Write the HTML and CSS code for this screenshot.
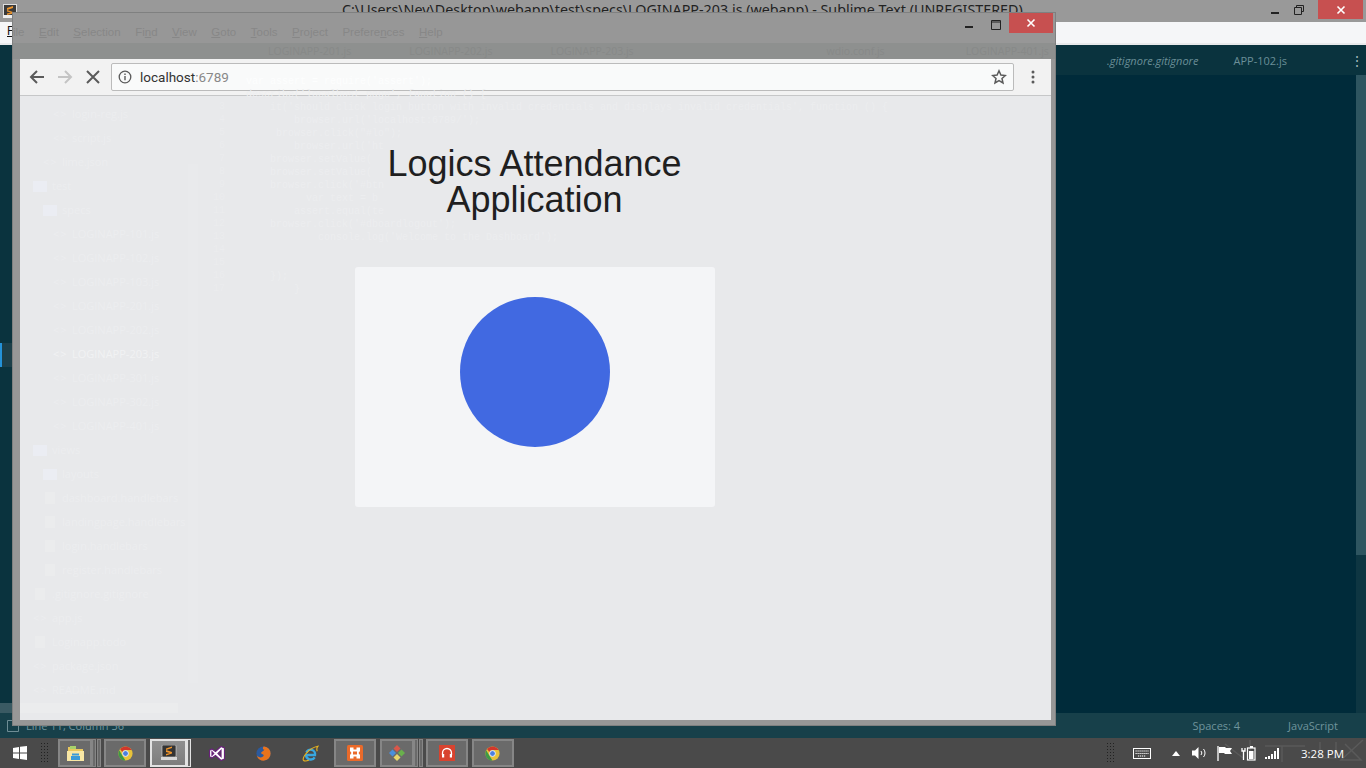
FILE: index.html
```html
<!DOCTYPE html>
<html lang="en">
<head>
  <meta charset="UTF-8" />
  <title>Logics Attendance Application</title>
  <link rel="stylesheet" href="styles.css">
</head>
<body>

  <!-- Sublime window behind -->
  <div class="sublime">
    <div class="sub-title">
      <svg class="sub-logo" width="14" height="14" viewBox="0 0 14 14"><rect x=".5" y=".5" width="13" height="11" fill="#3a3a3a" stroke="#ddd"/><path d="M4 4l6-2v2L4 6zM4 6l6 2v1.500l-6 1.500V9.500l4-1L4 7.500z" fill="#f0952b"/><rect y="11" width="14" height="3" fill="#eee"/></svg>
      <span class="sub-title-text">C:\Users\Nev\Desktop\webapp\test\specs\LOGINAPP-203.js (webapp) - Sublime Text (UNREGISTERED)</span>
      <div class="win-btns">
        <svg class="win-icon" width="10" height="10" viewBox="0 0 10 10"><rect x="1" y="7" width="8" height="2" fill="#222"/></svg>
        <svg class="win-icon" width="10" height="10" viewBox="0 0 10 10"><path d="M2.500 2.500V.5h7v6h-2M.5 2.500h7v7h-7z" fill="none" stroke="#222"/></svg>
        <div class="win-close">
          <svg width="10" height="10" viewBox="0 0 10 10"><path d="M1.500 1.500l7 7M8.500 1.500l-7 7" stroke="#fff" stroke-width="1.600"/></svg>
        </div>
      </div>
    </div>
    <div class="sub-menu"><span class="sub-menu-f">F</span></div>
    <div class="sub-tabs">
      <span class="sub-tab git">.gitignore.gitignore</span>
      <span class="sub-tab app">APP-102.js</span>
      <span class="sub-dots">⋮</span>
    </div>
    <div class="sub-main">
      <div class="sub-side">
        <div class="sub-side-active"></div>
        <div class="sub-side-scroll"></div>
      </div>
      <div class="sub-editor"></div>
      <div class="sub-scroll"><div class="sub-scroll-thumb"></div></div>
    </div>
    <div class="sub-status">
      <svg class="status-box" width="12" height="12" viewBox="0 0 12 12"><path d="M.5 .5h11v11H.5z" fill="none" stroke="#6f8d95"/></svg>
      <span class="status-line">Line 11, Column 36</span>
      <span class="status-spaces">Spaces: 4</span>
      <span class="status-lang">JavaScript</span>
    </div>
  </div>

  <!-- Chrome window on top -->
  <div class="chrome">
    <div class="chrome-title">
      <div class="ghost-menu">
        <span>ile</span><span><u>E</u>dit</span><span><u>S</u>election</span><span>Fi<u>n</u>d</span><span><u>V</u>iew</span><span><u>G</u>oto</span><span><u>T</u>ools</span><span><u>P</u>roject</span><span>Prefere<u>n</u>ces</span><span><u>H</u>elp</span>
      </div>
      <div class="win-btns chrome-btns">
        <svg class="win-icon min" width="10" height="10" viewBox="0 0 10 10"><rect x="1" y="7" width="8" height="2" fill="#222"/></svg>
        <svg class="win-icon max" width="10" height="10" viewBox="0 0 10 10"><path d="M.5 .5h9v9h-9zM.5 2h9" fill="none" stroke="#222"/></svg>
        <div class="win-close chrome-close">
          <svg width="10" height="10" viewBox="0 0 10 10"><path d="M1.500 1.500l7 7M8.500 1.500l-7 7" stroke="#fff" stroke-width="1.600"/></svg>
        </div>
      </div>
    </div>
    <div class="chrome-strip">
      <span>LOGINAPP-201.js</span><span>LOGINAPP-202.js</span><span>LOGINAPP-203.js</span><span class="far1">wdio.conf.js</span><span class="far2">LOGINAPP-401.js</span>
    </div>
    <div class="chrome-client">
      <div class="toolbar">
        <svg class="tool-icon" width="18" height="18" viewBox="0 0 18 18"><path d="M16 9H3M9 3L3 9l6 6" fill="none" stroke="#5a5a5a" stroke-width="2"/></svg>
        <svg class="tool-icon" width="18" height="18" viewBox="0 0 18 18"><path d="M2 9h13M9 3l6 6-6 6" fill="none" stroke="#c4c4c4" stroke-width="2"/></svg>
        <svg class="tool-icon" width="18" height="18" viewBox="0 0 18 18"><path d="M3 3l12 12M15 3L3 15" fill="none" stroke="#5a5a5a" stroke-width="2"/></svg>
        <div class="omnibox">
          <svg width="14" height="14" viewBox="0 0 14 14"><circle cx="7" cy="7" r="5.800" fill="none" stroke="#5a5a5a" stroke-width="1.300"/><path d="M7 6v4.200M7 3.600v1.400" stroke="#5a5a5a" stroke-width="1.400"/></svg>
          <span class="url">localhost<span class="url-port">:6789</span></span>
          <svg class="star" width="16" height="16" viewBox="0 0 16 16"><path d="M8 1.800l1.900 4.200 4.500.500-3.400 3 1 4.500L8 11.700 4 14l1-4.500-3.400-3 4.500-.500z" fill="none" stroke="#5a5a5a" stroke-width="1.500"/></svg>
        </div>
        <svg class="tool-menu" width="4" height="14" viewBox="0 0 4 14"><circle cx="2" cy="2" r="1.500" fill="#5a5a5a"/><circle cx="2" cy="7" r="1.500" fill="#5a5a5a"/><circle cx="2" cy="12" r="1.500" fill="#5a5a5a"/></svg>
      </div>

      <!-- faint reflection of the sublime sidebar and code -->
      <div class="ghost-bar"></div>
      <div class="ghost-hbar"></div>
      <div class="ghost-side">
        <div class="gr d3 code">login-reg.js</div>
        <div class="gr d3 code">script.js</div>
        <div class="gr d2 code">lime.json</div>
        <div class="gr d1 folder">test</div>
        <div class="gr d2 folder">specs</div>
        <div class="gr d3 code">LOGINAPP-101.js</div>
        <div class="gr d3 code">LOGINAPP-102.js</div>
        <div class="gr d3 code">LOGINAPP-103.js</div>
        <div class="gr d3 code">LOGINAPP-201.js</div>
        <div class="gr d3 code">LOGINAPP-202.js</div>
        <div class="gr d3 code on">LOGINAPP-203.js</div>
        <div class="gr d3 code">LOGINAPP-301.js</div>
        <div class="gr d3 code">LOGINAPP-302.js</div>
        <div class="gr d3 code">LOGINAPP-401.js</div>
        <div class="gr d1 folder">views</div>
        <div class="gr d2 folder">layouts</div>
        <div class="gr d2 doc">dashboard.handlebars</div>
        <div class="gr d2 doc">landingpage.handlebars</div>
        <div class="gr d2 doc">login.handlebars</div>
        <div class="gr d2 doc">register.handlebars</div>
        <div class="gr d1 doc">.gitignore.gitignore</div>
        <div class="gr d1 code">app.js</div>
        <div class="gr d1 doc">Loginapp.todo</div>
        <div class="gr d1 code">package.json</div>
        <div class="gr d1 code">README.md</div>
      </div>
      <div class="ghost-nums">
        <div>3</div><div>4</div><div>5</div><div>6</div><div>7</div><div>8</div><div>9</div><div>10</div><div>11</div><div>12</div><div>13</div><div>14</div><div>15</div><div>16</div><div>17</div>
      </div>
      <div class="ghost-code">
        <div class="top">var assert = require('assert');</div>
        <div class="edge">describe('localhost page', function () {</div>
        <div>    it('should click login button with invalid credentials and displays invalid credentials', function () {</div>
        <div>        browser.url('localhost:6789/');</div>
        <div>     browser.click("#lo");</div>
        <div>        browser.url('ht</div>
        <div>    browser.setValue(</div>
        <div>    browser.setValue(</div>
        <div>    browser.click('#btn</div>
        <div>          var text = b</div>
        <div>        assert.equal(te</div>
        <div>    browser.click('#dboardlogout');</div>
        <div>            console.log('Welcome to the Dashboard');</div>
        <div>&nbsp;</div>
        <div>&nbsp;</div>
        <div>    });</div>
        <div>        }</div>
      </div>

      <div class="page">
        <h1 class="page-title">Logics Attendance Application</h1>
        <div class="card">
          <div class="spinner"></div>
        </div>
      </div>
    </div>
  </div>

  <!-- Windows taskbar -->
  <div class="taskbar">
    <svg class="start" width="14" height="14" viewBox="0 0 14 14"><path d="M0 2l6-1v5.500H0zM7 .800L14 0v6.500H7zM0 7.500h6V13l-6-1zM7 7.500h7V14l-7-1z" fill="#fff"/></svg>
    <div class="grip"></div>
    <div class="task open short">
      <svg width="17" height="16" viewBox="0 0 17 16"><path d="M1 2h5l1 2h9v11H1z" fill="#e9c85d"/><path d="M3 1h6v3H3z" fill="#a8d26a"/><path d="M0 6h17v10H0z" fill="#f8e7a5"/><path d="M5 8.500h7v2H5zM4 11h9v4H4z" fill="#3a9ad9"/></svg>
    </div>
    <div class="task-tail"></div>
    <div class="task-tail last"></div>
    <div class="task open">
      <svg class="chrome-logo" width="15" height="15" viewBox="0 0 18 18"><circle cx="9" cy="9" r="8.500" fill="#e8c33a"/><path d="M9 .5a8.500 8.500 0 0 1 7.400 4.300H9a4.200 4.200 0 0 0-3.800 2.400L2.400 3.600A8.500 8.500 0 0 1 9 .5z" fill="#d2372c"/><path d="M1.500 5L5.500 12 9 17.500A8.500 8.500 0 0 1 1.500 5z" fill="#3d9a46"/><circle cx="9" cy="9" r="3.500" fill="#4a7fe0" stroke="#fff"/></svg>
    </div>
    <div class="task active">
      <svg width="16" height="16" viewBox="0 0 16 16"><rect x="1" y="0" width="14" height="12" rx="1" fill="#333" stroke="#ddd" stroke-width=".6"/><path d="M5 3.500l6-2V3L5 5zM5 5l6 2v1.500L5 10.500V9l4-1-4-1z" fill="#f0952b"/><rect x="0" y="12" width="16" height="3" fill="#d8d8d8"/></svg>
    </div>
    <div class="task-tail lit"></div>
    <div class="task pin">
      <svg width="16" height="15" viewBox="0 0 16 15"><path d="M12 .5l3.500 1.500v11L12 14.500 6.500 9.500 3 12 .5 10.800V4.200L3 3l3.500 2.500zM12 4.500L9 7.500l3 3zM3 5.800v3.400L4.700 7.500z" fill="#fff" stroke="#68217a" stroke-width="1.200"/></svg>
    </div>
    <div class="task pin">
      <svg width="15" height="15" viewBox="0 0 18 18"><circle cx="9" cy="9" r="8.500" fill="#2b5a9e"/><path d="M10 .6a8.500 8.500 0 1 1-9.200 10.500c2 3 6.500 3.500 8.200 1 1.200-2-2-2.200-3-3.300 0-2 3-2.200 4-4.300-2 0-2.300-2-1-3.900z" fill="#e8731c"/></svg>
    </div>
    <div class="task pin">
      <svg width="17" height="17" viewBox="0 0 17 17"><path d="M4 10h9a4.500 4.500 0 0 0-8.600-2.500M4 10a4.700 4.700 0 0 0 8.700 2.300" fill="none" stroke="#38a7e0" stroke-width="2.400"/><path d="M1.500 15.500C0 13 6 3 16 1.200c-1.500 1.500-1.500 3-.8 5M1.500 15.500c1.500 1 3.500.5 5.500-.5" fill="none" stroke="#eab51e" stroke-width="1.100"/></svg>
    </div>
    <div class="task open">
      <svg width="16" height="16" viewBox="0 0 16 16"><rect width="16" height="16" rx="1.500" fill="#ea6a2a"/><path d="M3 2.500h3.500v2h3v-2H13v3.500l-1.500 2L13 10v3.500H9.500v-2h-3v2H3V10l1.500-2L3 6z" fill="#fff"/><rect x="6" y="6.500" width="4" height="3" fill="#ea6a2a"/></svg>
    </div>
    <div class="task open short">
      <svg width="16" height="16" viewBox="0 0 16 16"><path d="M8 0l3.500 3.500L8 7 4.500 3.500z" fill="#d9574a"/><path d="M12.500 4.500L16 8l-3.500 3.500L9 8z" fill="#69b04c"/><path d="M8 9l3.500 3.500L8 16l-3.500-3.500z" fill="#e8d66a"/><path d="M3.500 4.500L7 8l-3.500 3.500L0 8z" fill="#4a8fdc"/></svg>
    </div>
    <div class="task-tail"></div>
    <div class="task-tail last"></div>
    <div class="task open">
      <svg width="16" height="16" viewBox="0 0 16 16"><rect width="16" height="16" fill="#d8432f"/><path d="M3.500 10V8a4.500 4.500 0 0 1 9 0v2" fill="none" stroke="#fff" stroke-width="1.300"/><rect x="3" y="9" width="2.200" height="3.500" fill="#fff"/><rect x="10.800" y="9" width="2.200" height="3.500" fill="#fff"/></svg>
    </div>
    <div class="task open">
      <svg class="chrome-logo" width="15" height="15" viewBox="0 0 18 18"><circle cx="9" cy="9" r="8.500" fill="#e8c33a"/><path d="M9 .5a8.500 8.500 0 0 1 7.400 4.300H9a4.200 4.200 0 0 0-3.800 2.400L2.400 3.600A8.500 8.500 0 0 1 9 .5z" fill="#d2372c"/><path d="M1.500 5L5.500 12 9 17.500A8.500 8.500 0 0 1 1.500 5z" fill="#3d9a46"/><circle cx="9" cy="9" r="3.500" fill="#4a7fe0" stroke="#fff"/></svg>
    </div>

    <svg class="tray-smudge" width="146" height="30" viewBox="0 0 146 30"><path d="M5 6l18 14M30 2v18M45 8h40M62 8v16M100 4v16h16V4M125 6l16 16h-20l22-20" fill="none" stroke="#5a5a5a" stroke-width="1.500"/></svg>
    <div class="tray">
      <div class="grip tray-grip"></div>
      <svg class="tray-kb" width="18" height="11" viewBox="0 0 18 11"><rect x=".5" y=".5" width="17" height="10" fill="none" stroke="#fff"/><path d="M2.500 3h13M2.500 5.500h13M5 8h8" stroke="#fff" stroke-width="1.200" stroke-dasharray="1.200 .8"/></svg>
      <svg class="tray-up" width="8" height="5" viewBox="0 0 8 5"><path d="M0 5l4-5 4 5z" fill="#fff"/></svg>
      <svg class="tray-icon" width="16" height="14" viewBox="0 0 16 14"><path d="M0 4.500h3L6.500 1v12L3 9.500H0z" fill="#fff"/><path d="M9 5a3 3 0 0 1 0 4M11.500 3a6 6 0 0 1 0 8" fill="none" stroke="#fff"/></svg>
      <svg class="tray-icon" width="15" height="15" viewBox="0 0 15 15"><path d="M1 0v15" stroke="#fff" stroke-width="1.300"/><path d="M2 1h6l1 1h6l-2 3 2 3H8L7 7H2z" fill="#fff"/></svg>
      <svg class="tray-icon" width="15" height="15" viewBox="0 0 15 15"><path d="M1 2v3h3V2M2.500 5v9" fill="none" stroke="#fff" stroke-width="1.300"/><rect x="6.500" y="2" width="7.500" height="12" fill="none" stroke="#fff" stroke-width="1.200"/><rect x="8" y="5" width="4.500" height="8" fill="#fff"/><rect x="9" y="0" width="3" height="2" fill="#fff"/></svg>
      <svg class="tray-icon" width="15" height="11" viewBox="0 0 15 11"><path d="M0 9h2v2H0zM3 8h2v3H3zM6 6h2v5H6zM9 3h2v8H9zM12 0h2v11h-2z" fill="#fff"/></svg>
      <span class="clock">3:28 PM</span>
    </div>
  </div>

</body>
</html>
```

FILE: styles.css
```css
* {
  box-sizing: border-box;
}
html, body {
  margin: 0;
  padding: 0;
  width: 1366px;
  height: 768px;
  overflow: hidden;
}
body {
  position: relative;
  font-family: "Open Sans", sans-serif;
  background: #002b3a;
}

/* sublime */
.sublime {
  height: 738px;
  display: flex;
  flex-direction: column;
}
.sub-title {
  height: 22px;
  background: #999;
  display: flex;
  align-items: flex-start;
  color: #222;
  font-family: "Noto Sans", sans-serif;
  font-size: 14.3px;
}
.sub-logo {
  margin: 4px 0 0 3px;
}
.sub-title-text {
  margin-left: 325px;
  margin-top: 0;
  white-space: nowrap;
}
.win-btns {
  margin-left: auto;
  display: flex;
  align-items: flex-start;
}
.win-icon {
  margin-top: 5px;
  margin-right: 14px;
}
.win-close {
  width: 45px;
  height: 19px;
  background: #c75050;
  display: flex;
  align-items: center;
  justify-content: center;
}
.sub-title .win-btns {
  margin-right: 3px;
}
.sub-menu {
  height: 21px;
  background: #f5f6f8;
  padding: 2px 0 0 7px;
  font-family: "Liberation Sans", sans-serif;
  font-size: 12px;
  color: #111;
}
.sub-menu-f {
  text-decoration: underline;
}
.sub-tabs {
  height: 32px;
  background: #0a333e;
  display: flex;
  align-items: center;
  font-size: 11px;
  color: #6b8f98;
  border-top: 2px solid #e8e9eb;
}
.sub-tab.git {
  margin-left: 1107px;
  font-style: italic;
}
.sub-tab.app {
  margin-left: 35px;
}
.sub-dots {
  margin-left: auto;
  margin-right: 2px;
  font-size: 14px;
  color: #9fb4ba;
}
.sub-main {
  flex: 1;
  display: flex;
}
.sub-side {
  width: 190px;
  background: #0a333e;
  position: relative;
}
.sub-side-active {
  position: absolute;
  left: 0;
  top: 268px;
  width: 12px;
  height: 24px;
  background: #1c3f49;
  border-left: 2px solid #2492d8;
}
.sub-side-scroll {
  position: absolute;
  left: 0;
  bottom: 0;
  width: 12px;
  height: 10px;
  background: #3a5a63;
}
.sub-editor {
  flex: 1;
  background: #002b3a;
}
.sub-scroll {
  width: 10px;
  background: #0e3642;
}
.sub-scroll-thumb {
  height: 480px;
  background: #2e5560;
}
.sub-status {
  height: 25px;
  background: #17404a;
  display: flex;
  align-items: center;
  font-size: 11px;
  color: #6f949c;
  padding-left: 7px;
}
.status-line {
  margin-left: 7px;
}
.status-spaces {
  margin-left: auto;
}
.status-lang {
  margin-left: 48px;
  margin-right: 28px;
}

/* chrome */
.chrome {
  position: absolute;
  left: 12px;
  top: 12px;
  width: 1044px;
  height: 714px;
  background: #979797;
  border: 1px solid #7f8080;
  display: flex;
  flex-direction: column;
}
.chrome-title {
  height: 30px;
  display: flex;
  align-items: flex-start;
  flex-shrink: 0;
}
.ghost-menu {
  display: flex;
  gap: 14.5px;
  padding: 13px 0 0 0;
  font-family: "Liberation Sans", sans-serif;
  font-size: 11.5px;
  color: #878787;
  white-space: nowrap;
}
.chrome-btns {
  margin-right: 2px;
}
.chrome-btns .min {
  margin-top: 6px;
  margin-right: 17px;
}
.chrome-btns .max {
  margin-top: 7px;
  margin-right: 8px;
}
.chrome-close {
  width: 44px;
  height: 20px;
}
.chrome-strip {
  height: 16px;
  background: #8e908f;
  display: flex;
  flex-shrink: 0;
  padding: 1px 0 0 255px;
  gap: 58px;
  font-size: 10.5px;
  line-height: 14px;
  color: #878988;
  white-space: nowrap;
}
.chrome-strip .far1 {
  margin-left: 135px;
}
.chrome-strip .far2 {
  margin-left: 23px;
}
.chrome-client {
  margin: 0 4px 5px 7px;
  flex: 1;
  display: flex;
  flex-direction: column;
  background: #e8e9eb;
  position: relative;
  overflow: hidden;
}
.toolbar {
  height: 37px;
  flex-shrink: 0;
  background: #f2f2f2;
  border-bottom: 1px solid #c6c7c8;
  display: flex;
  align-items: center;
  padding-left: 8px;
}
.tool-icon {
  margin-right: 10px;
}
.tool-icon:nth-child(3) {
  margin-right: 9px;
}
.omnibox {
  width: 903px;
  height: 28px;
  background: #f9fafa;
  border: 1px solid #bbb;
  border-radius: 2px;
  display: flex;
  align-items: center;
  padding: 0 6px;
  gap: 8px;
}
.url {
  font-family: "Roboto", "Liberation Sans", sans-serif;
  font-size: 13.5px;
  color: #333;
}
.url-port {
  color: #888;
}
.star {
  margin-left: auto;
}
.tool-menu {
  margin-left: 17px;
}
.page {
  flex: 1;
  position: relative;
  display: flex;
  flex-direction: column;
  align-items: center;
  padding: 50px 2px 0 0;
}
.page-title {
  width: 360px;
  margin: 0;
  font-family: "Liberation Sans", sans-serif;
  font-size: 36px;
  line-height: 36px;
  font-weight: 400;
  text-align: center;
  color: #1f1f1f;
}
.card {
  width: 360px;
  height: 240px;
  margin-top: 49px;
  padding-top: 30px;
  background: #f4f5f7;
  border-radius: 3px;
  display: flex;
  justify-content: center;
}
.spinner {
  width: 150px;
  height: 150px;
  border-radius: 50%;
  background: #4169e1;
}

/* the faint see-through bits */
.ghost-bar {
  position: absolute;
  left: 168px;
  top: 105px;
  width: 10px;
  height: 519px;
  background: #e9eaec;
}
.ghost-hbar {
  position: absolute;
  left: 0;
  top: 644px;
  width: 158px;
  height: 10px;
  background: #ebeced;
}
.ghost-side {
  position: absolute;
  left: 0;
  top: 43px;
  width: 170px;
  font-size: 11px;
  line-height: 24px;
  color: #ecedef;
  white-space: nowrap;
}
.gr {
  display: flex;
  align-items: center;
}
.gr::before {
  content: "";
  flex-shrink: 0;
  margin-right: 5px;
}
.gr.d1 {
  padding-left: 13px;
}
.gr.d2 {
  padding-left: 23px;
}
.gr.d3 {
  padding-left: 33px;
}
.gr.folder::before {
  width: 14px;
  height: 11px;
  background: #ebedf3;
}
.gr.doc::before {
  width: 10px;
  height: 12px;
  margin-left: 2px;
  margin-right: 7px;
  background: #ebeced;
}
.gr.code::before {
  content: "<>";
  width: 14px;
  font-size: 11px;
  letter-spacing: 1px;
}
.gr.on {
  color: #f1f2f3;
}
.ghost-nums {
  position: absolute;
  left: 185px;
  top: 41px;
  width: 20px;
  font-family: "Liberation Mono", monospace;
  font-size: 10px;
  line-height: 13px;
  text-align: right;
  color: #ebecee;
}
.ghost-code {
  position: absolute;
  left: 226px;
  top: 16px;
  display: flex;
  flex-direction: column;
  align-items: flex-start;
  font-family: "Liberation Mono", monospace;
  font-size: 10px;
  line-height: 13px;
  color: #ecedef;
  white-space: pre;
}
.ghost-code .top {
  color: #fdfefe;
}
.ghost-code .edge {
  color: #eeeff0;
}

/* taskbar */
.taskbar {
  position: relative;
  height: 30px;
  background: #4a4a4a;
  display: flex;
  align-items: center;
  color: #fff;
}
.start {
  margin-left: 13px;
}
.grip {
  width: 8px;
  height: 22px;
  margin-left: 13px;
  margin-right: 10px;
  background-image: radial-gradient(#222 1px, transparent 1px);
  background-size: 3px 3px;
}
.task {
  width: 42px;
  height: 28px;
  display: flex;
  align-items: center;
  justify-content: center;
  margin-right: 4px;
  flex-shrink: 0;
}
.task.open {
  background: #6a6a6a;
  border: 2px solid #868686;
}
.task.short {
  width: 34px;
  margin-right: 0;
}
.task.active {
  width: 37px;
  margin-right: 0;
  background: linear-gradient(#8f8f8f, #7d7d7d);
  border: 2px solid #e2e2e2;
}
.task.pin {
  width: 46.5px;
  margin-right: 0;
}
.task-tail {
  width: 4px;
  height: 28px;
  margin-right: 1px;
  border: 1px solid #868686;
  background: #6a6a6a;
}
.task-tail.last {
  margin-right: 3px;
}
.task-tail.lit {
  margin-right: 3px;
  border-color: #e2e2e2;
}
.tray-smudge {
  position: absolute;
  right: 0;
  top: 0;
}
.tray {
  position: relative;
  margin-left: auto;
  display: flex;
  align-items: center;
}
.tray-grip {
  margin: 0 19px 0 0;
}
.tray-kb {
  margin-right: 21px;
}
.tray-up {
  margin-right: 12px;
}
.tray-icon {
  margin-right: 9px;
}
.clock {
  margin-left: 12px;
  margin-right: 22px;
  font-size: 11.5px;
}
```
